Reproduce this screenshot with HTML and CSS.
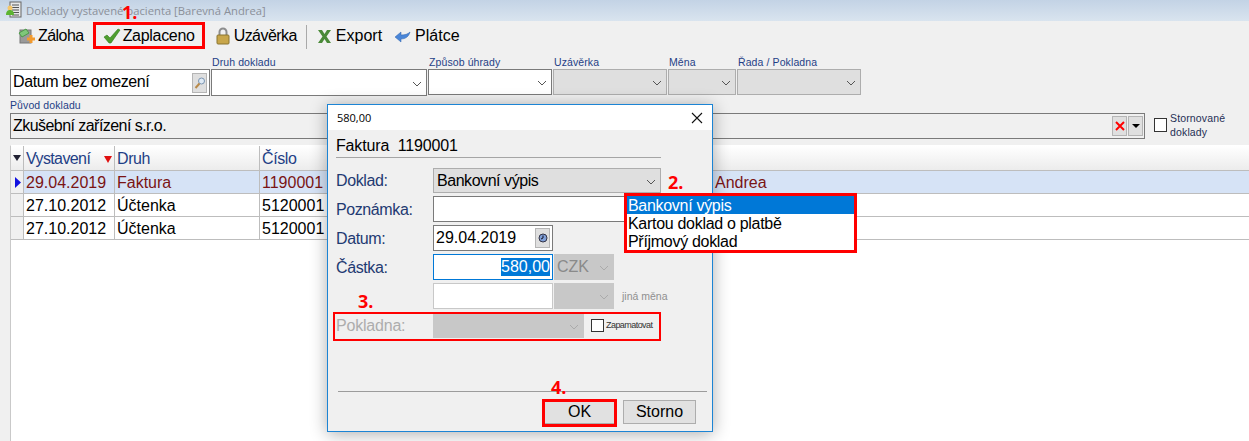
FILE: index.html
```html
<!DOCTYPE html>
<html lang="cs">
<head>
<meta charset="utf-8">
<title>Doklady vystavené pacienta</title>
<link rel="stylesheet" href="styles.css">
</head>
<body>
<div class="window">
  <header class="titlebar">
    <svg class="title-icon" width="18" height="18" viewBox="0 0 18 18"><rect x="5" y="1" width="11" height="15" fill="#e8e8e8" stroke="#666"/><path d="M7 4h7M7 6.500h7M7 9h7M7 11.500h7M7 14h7" stroke="#555"/><circle cx="5" cy="7" r="2.500" fill="#f5c76a"/><path d="M1 14c0-4 2-5 4-5s4 1 4 5z" fill="#5cb531"/></svg>
    <span class="title-text">Doklady vystavené pacienta [Barevná Andrea]</span>
  </header>

  <nav class="toolbar">
    <div class="tool narrow">
      <svg width="18" height="18" viewBox="0 0 18 18"><rect x="2" y="3" width="11" height="13" fill="#9a9a9a" stroke="#777"/><path d="M1 6l7-4 3 4-7 4z" fill="#7fc77a" stroke="#4d9a4a"/><path d="M9 12h8M13 8v8" stroke="#f29a2e" stroke-width="3"/></svg>
      <span>Záloha</span>
    </div>
    <div class="tool">
      <svg width="18" height="18" viewBox="0 0 18 18"><path d="M1 10l3-2 3 3 8-9 2 1-9 13H6z" fill="#4f9e2e" stroke="#2f7a1a" stroke-width=".6"/></svg>
      <span>Zaplaceno</span>
    </div>
    <div class="tool narrow">
      <svg class="lock-icon" width="15" height="18" viewBox="0 0 15 18"><path d="M4 8V5a3.500 3.500 0 0 1 7 0v3" fill="none" stroke="#8d8d8d" stroke-width="2"/><rect x="1.500" y="8" width="12" height="9" rx="1" fill="#c8a64a" stroke="#8a7430"/></svg>
      <span>Uzávěrka</span>
    </div>
    <div class="tool-sep"></div>
    <div class="tool tight">
      <svg width="15" height="18" viewBox="0 0 15 18"><path d="M1 3h4l2.500 4L10 3h4l-4.500 6.500L14 16h-4l-2.500-4L5 16H1l4.500-6.500z" fill="#4a8a38"/></svg>
      <span>Export</span>
    </div>
    <div class="tool tight">
      <svg width="17" height="18" viewBox="0 0 17 18"><path d="M1 10l6-5v3c4 0 7-1 9-3-1 4-4 7-9 7v3z" fill="#4a86d8" stroke="#2f62ad" stroke-width=".5"/></svg>
      <span>Plátce</span>
    </div>
  </nav>

  <section class="filters">
    <div class="filter-row">
      <div class="field field-date">
        <label class="field-label">&nbsp;</label>
        <div class="control date-control">
          <span class="date-text">Datum bez omezení</span>
          <span class="mini-btn"><svg width="12" height="14" viewBox="0 0 12 14"><circle cx="7.500" cy="5" r="3" fill="#dfeaf5" stroke="#7a94b0"/><path d="M5.500 7.500L1.500 12" stroke="#b98a4a" stroke-width="2"/></svg></span>
        </div>
      </div>
      <div class="field field-druh">
        <label class="field-label">Druh dokladu</label>
        <div class="control select"><svg class="chev" width="10" height="6" viewBox="0 0 10 6"><path d="M1 1l4 4 4-4" fill="none" stroke="#555"/></svg></div>
      </div>
      <div class="field field-zpusob">
        <label class="field-label">Způsob úhrady</label>
        <div class="control select"><svg class="chev" width="10" height="6" viewBox="0 0 10 6"><path d="M1 1l4 4 4-4" fill="none" stroke="#555"/></svg></div>
      </div>
      <div class="field field-uzaverka">
        <label class="field-label">Uzávěrka</label>
        <div class="control select off"><svg class="chev" width="10" height="6" viewBox="0 0 10 6"><path d="M1 1l4 4 4-4" fill="none" stroke="#555"/></svg></div>
      </div>
      <div class="field field-mena">
        <label class="field-label">Měna</label>
        <div class="control select off"><svg class="chev" width="10" height="6" viewBox="0 0 10 6"><path d="M1 1l4 4 4-4" fill="none" stroke="#555"/></svg></div>
      </div>
      <div class="field field-rada">
        <label class="field-label">Řada / Pokladna</label>
        <div class="control select off"><svg class="chev" width="10" height="6" viewBox="0 0 10 6"><path d="M1 1l4 4 4-4" fill="none" stroke="#555"/></svg></div>
      </div>
    </div>
    <div class="origin-row">
      <div class="field field-origin">
        <label class="field-label">Původ dokladu</label>
        <div class="control origin-control">
          <span class="origin-text">Zkušební zařízení s.r.o.</span>
          <span class="mini-btn"><svg width="10" height="10" viewBox="0 0 10 10"><path d="M1 1l8 8M9 1l-8 8" stroke="#f00" stroke-width="2"/></svg></span>
          <span class="mini-btn"><svg width="8" height="4" viewBox="0 0 8 4"><path d="M0 0h8L4 4z" fill="#000"/></svg></span>
        </div>
      </div>
      <div class="storno">
        <span class="checkbox"></span>
        <span class="storno-label">Stornované<br>doklady</span>
      </div>
    </div>
  </section>

  <section class="grid">
    <div class="grid-row grid-head">
      <div class="cell ind"><svg width="8" height="6" viewBox="0 0 8 6"><path d="M0 0h8L4 6z" fill="#223"/></svg></div>
      <div class="cell sort-cell">Vystavení<svg width="8" height="7" viewBox="0 0 8 7"><path d="M0 0h8L4 7z" fill="#e01010"/></svg></div>
      <div class="cell">Druh</div>
      <div class="cell">Číslo</div>
      <div class="cell last"></div>
    </div>
    <div class="grid-row selected">
      <div class="cell ind"><svg width="6" height="11" viewBox="0 0 6 11"><path d="M0 0l6 5.500L0 11z" fill="#1010e0"/></svg></div>
      <div class="cell">29.04.2019</div>
      <div class="cell">Faktura</div>
      <div class="cell">1190001</div>
      <div class="cell last">Andrea</div>
    </div>
    <div class="grid-row">
      <div class="cell ind"></div>
      <div class="cell">27.10.2012</div>
      <div class="cell">Účtenka</div>
      <div class="cell">5120001</div>
      <div class="cell last"></div>
    </div>
    <div class="grid-row">
      <div class="cell ind"></div>
      <div class="cell">27.10.2012</div>
      <div class="cell">Účtenka</div>
      <div class="cell">5120001</div>
      <div class="cell last"></div>
    </div>
  </section>
</div>

<div class="dialog">
  <div class="dialog-title">
    <span>580,00</span>
    <svg width="12" height="12" viewBox="0 0 12 12"><path d="M1 1l10 10M11 1L1 11" stroke="#111" stroke-width="1.100"/></svg>
  </div>
  <div class="dialog-body">
    <div class="dialog-heading">Faktura&nbsp; 1190001</div>
    <div class="dialog-form">
      <div class="form-row">
        <span class="form-label">Doklad:</span>
        <div class="control select off wide"><span class="select-text">Bankovní výpis</span><svg class="chev" width="10" height="6" viewBox="0 0 10 6"><path d="M1 1l4 4 4-4" fill="none" stroke="#555"/></svg></div>
      </div>
      <div class="form-row tall">
        <span class="form-label">Poznámka:</span>
        <div class="control wide"></div>
      </div>
      <div class="form-row tall">
        <span class="form-label">Datum:</span>
        <div class="control amount date-input">
          <span>29.04.2019</span>
          <span class="mini-btn"><svg width="10" height="10" viewBox="0 0 10 10"><circle cx="5" cy="5" r="4" fill="#7f9fd8" stroke="#334"/><path d="M5 2.500V5l-2 1" stroke="#112" fill="none"/></svg></span>
        </div>
      </div>
      <div class="form-row tall">
        <span class="form-label">Částka:</span>
        <div class="control amount focused"><span class="selection">580,00</span></div>
        <div class="control select disabled currency"><span>CZK</span><svg class="chev" width="10" height="6" viewBox="0 0 10 6"><path d="M1 1l4 4 4-4" fill="none" stroke="#aaa"/></svg></div>
      </div>
      <div class="form-row tall">
        <span class="form-label"></span>
        <div class="control amount faint"></div>
        <div class="control select disabled currency"><svg class="chev" width="10" height="6" viewBox="0 0 10 6"><path d="M1 1l4 4 4-4" fill="none" stroke="#aaa"/></svg></div>
        <span class="other-currency">jiná měna</span>
      </div>
      <div class="form-row cash">
        <span class="form-label muted">Pokladna:</span>
        <div class="control select disabled cash-select"><svg class="chev" width="10" height="6" viewBox="0 0 10 6"><path d="M1 1l4 4 4-4" fill="none" stroke="#aaa"/></svg></div>
        <span class="checkbox small"></span>
        <span class="remember">Zapamatovat</span>
      </div>
    </div>
    <div class="dialog-footer">
      <button class="btn primary">OK</button>
      <button class="btn">Storno</button>
    </div>
  </div>
</div>

<div class="dropdown-list">
  <div class="option active">Bankovní výpis</div>
  <div class="option">Kartou doklad o platbě</div>
  <div class="option">Příjmový doklad</div>
</div>

<div class="mark box-1"></div>
<div class="mark box-3"></div>
<div class="mark box-4"></div>
<span class="step step-1">1.</span>
<span class="step step-2">2.</span>
<span class="step step-3">3.</span>
<span class="step step-4">4.</span>
</body>
</html>
```
FILE: styles.css
```css
* { box-sizing: border-box; }
html, body { margin: 0; padding: 0; }
body {
  width: 1249px;
  height: 441px;
  overflow: hidden;
  position: relative;
  background: #f0f0f0;
  font: 16px/1.15 "Liberation Sans", Arial, sans-serif;
  color: #000;
}
.window { display: flex; flex-direction: column; height: 441px; }

.titlebar {
  height: 21px;
  display: flex;
  align-items: center;
  padding-left: 5px;
  gap: 3px;
  background: linear-gradient(#c3d3e5, #d9e4ef);
  flex: none;
}
.title-text { font: 11.250px "Open Sans", sans-serif; color: #8b9099; }
.title-icon { margin-top: -2px; }

.toolbar {
  height: 29px;
  flex: none;
  display: flex;
  align-items: center;
  padding: 2px 0 0 8px;
  letter-spacing: -.3px;
}
.tool { display: flex; align-items: center; gap: 2px; padding: 0 9px 0 10px; }
.tool.narrow { letter-spacing: -.55px; }
.tool.tight { padding: 0 6px; gap: 4px; letter-spacing: 0; }
.lock-icon { width: 18px; }
.tool-sep { width: 1px; height: 24px; background: #a9a9a9; margin-right: 4px; }

.filters { flex: none; padding-left: 10px; }
.filter-row { display: flex; gap: 1px; }
.field-label {
  display: block;
  height: 19px;
  padding: 6px 0 0 1px;
  font-size: 10.500px;
  line-height: 12px;
  letter-spacing: .1px;
  color: #1f3f86;
  white-space: nowrap;
}
.control {
  height: 26px;
  display: flex;
  align-items: center;
  background: #fff;
  border: 1px solid #7a7a7a;
  padding: 0 2px;
  position: relative;
}
.select { padding-right: 16px; }
.select.off { background: #dfdfdf; border-color: #adadad; }
.select.disabled { background: #c8c8c8; border-color: #c8c8c8; color: #8a8a8a; }
.chev { position: absolute; right: 4px; top: 50%; margin-top: -2px; }

.field-date { width: 200px; }
.field-druh { width: 216px; }
.field-druh .control, .field-date .control { height: 27px; }
.field-zpusob { width: 124px; }
.field-uzaverka { width: 114px; }
.field-mena { width: 68px; }
.field-rada { width: 124px; }
.date-control { justify-content: space-between; padding-right: 2px; }
.date-text { letter-spacing: -.4px; }

.mini-btn {
  width: 15px;
  height: 20px;
  display: flex;
  align-items: center;
  justify-content: center;
  background: #dfdfdf;
  border: 1px solid #b5b5b5;
  flex: none;
}

.origin-row { display: flex; }
.field-origin { width: 1135px; }
.field-origin .field-label { height: 17px; padding-top: 3px; padding-left: 0; }
.origin-control { background: #f0f0f0; gap: 1px; padding-right: 1px; height: 26px; }
.origin-text { flex: 1; letter-spacing: -.55px; }
.storno {
  display: flex;
  margin-left: 9px;
  gap: 3px;
  padding-top: 15px;
}
.checkbox {
  width: 13px;
  height: 14px;
  margin-top: 7px;
  background: #fff;
  border: 1px solid #333;
  flex: none;
}
.storno-label { font-size: 10.500px; line-height: 14px; color: #1f2f55; letter-spacing: .15px; }

.grid {
  flex: 1;
  margin: 6px 0 0 10px;
  background: #fff;
  border-left: 1px solid #c9c9c9;
  border-top: 1px solid #fff;
}
.grid-row {
  display: grid;
  grid-template-columns: 13px 91px 145px 453px 1fr;
  height: 23px;
  border-bottom: 1px solid #bdbdbd;
  color: #000;
}
.grid-head {
  height: 25px;
  color: #1f3f86;
  background: linear-gradient(#fff, #ececec);
  letter-spacing: -.4px;
}
.cell {
  display: flex;
  align-items: center;
  padding: 2px 0 0 2px;
  border-right: 1px solid #bdbdbd;
  overflow: hidden;
  white-space: nowrap;
}
.cell.last { border-right: 0; }
.cell.ind { background: #f0f0f0; padding: 0 0 0 2px; }
.grid-head .cell.ind { background: transparent; }
.sort-cell { justify-content: space-between; padding-right: 2px; letter-spacing: -.6px; }
.selected { background: #d6e3f6; color: #7a1414; }
.selected .cell.ind { padding-left: 4px; }

.dialog {
  position: absolute;
  left: 327px;
  top: 104px;
  width: 386px;
  height: 328px;
  display: flex;
  flex-direction: column;
  background: #f0f0f0;
  border: 1px solid #1c84d4;
  box-shadow: 0 2px 16px rgba(0, 0, 0, .32);
}
.dialog-title {
  height: 25px;
  flex: none;
  display: flex;
  align-items: center;
  justify-content: space-between;
  padding: 0 9px;
  background: #fff;
  font: 11px "Open Sans", sans-serif;
}
.dialog-body {
  flex: 1;
  display: flex;
  flex-direction: column;
  padding: 6px 5px 6px 9px;
}
.dialog-heading {
  width: 325px;
  height: 22px;
  border-bottom: 1px solid #a5a5a5;
  line-height: 20px;
  flex: none;
  margin-left: -1px;
  letter-spacing: -.15px;
}
.dialog-form { display: flex; flex-direction: column; gap: 3px; margin-top: 10px; }
.form-row { display: flex; align-items: center; height: 25px; gap: 1px; }
.form-row.tall { height: 26px; }
.form-row.cash { height: 25px; margin-top: 1px; }
.form-label { width: 96px; margin-left: -1px; padding-top: 2px; flex: none; color: #1f3a72; letter-spacing: -.4px; }
.form-label.muted { color: #adadad; letter-spacing: -.2px; }
.wide { width: 228px; height: 100%; }
.select-text { letter-spacing: -.45px; padding: 1px 0 0 1px; }
.amount { width: 120px; height: 100%; }
.date-input { justify-content: space-between; padding: 0 2px 0 2px; }
.focused { justify-content: flex-end; border-color: #0078d7; padding-right: 2px; }
.faint { border-color: #c8c8c8; }
.selection { background: #0078d7; color: #fff; }
.currency { width: 60px; height: 100%; }
.other-currency { font-size: 10.500px; color: #8f8f8f; margin-left: 7px; }
.cash-select { width: 151px; height: 100%; }
.checkbox.small { width: 13px; height: 13px; margin: 0 1px 0 6px; }
.remember { font-size: 9px; letter-spacing: -.55px; color: #333; }

.dialog-footer {
  margin-top: auto;
  margin-left: 1px;
  width: 369px;
  height: 34px;
  border-top: 1px solid #9c9c9c;
  display: flex;
  justify-content: flex-end;
  gap: 8px;
  padding: 8px 11px 0 0;
}
.btn {
  height: 24px;
  padding: 0;
  font: inherit;
  background: #e1e1e1;
  border: 1px solid #adadad;
  color: #000;
  width: 73px;
}
.btn.primary { width: 71px; }

.dropdown-list {
  position: absolute;
  left: 627px;
  top: 196px;
  width: 227px;
  background: #fff;
  outline: 3px solid #f00;
  letter-spacing: -.3px;
}
.option { height: 18px; line-height: 20px; padding-left: 1px; white-space: nowrap; }
.option.active { background: #0078d7; color: #fff; }

.mark { position: absolute; border: 3px solid #f00; }
.box-1 { left: 93px; top: 22px; width: 112px; height: 27px; }
.box-3 { left: 333px; top: 312px; width: 328px; height: 29px; border-width: 2px; }
.box-4 { left: 542px; top: 399px; width: 75px; height: 28px; }

.step {
  position: absolute;
  font: 700 18px/20px "Open Sans", "Liberation Sans", sans-serif;
  color: #f00;
}
.step-1 { left: 122px; top: 2px; }
.step-2 { left: 668px; top: 172px; }
.step-3 { left: 358px; top: 291px; }
.step-4 { left: 551px; top: 377px; }
```
